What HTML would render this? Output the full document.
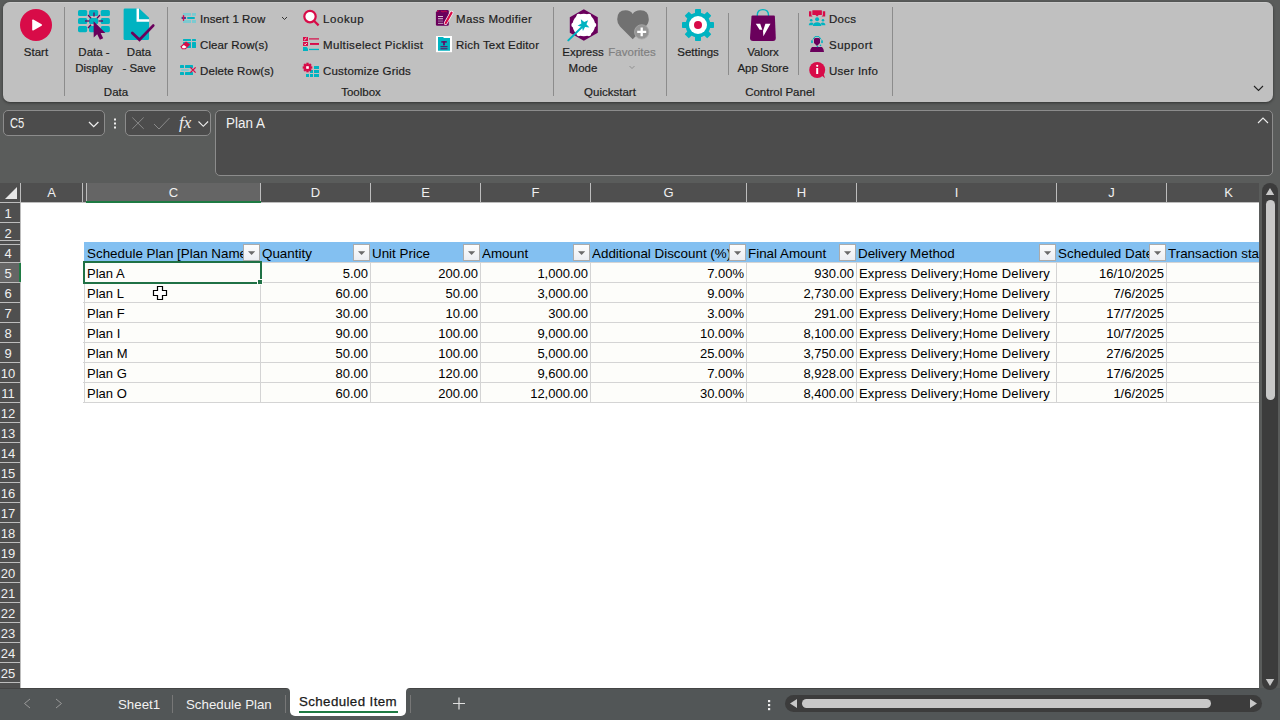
<!DOCTYPE html><html><head><meta charset="utf-8"><style>
*{margin:0;padding:0;box-sizing:border-box}
html,body{width:1280px;height:720px;overflow:hidden;background:#5a5c5b;font-family:"Liberation Sans",sans-serif;position:relative}
.a{position:absolute}
.t{position:absolute;white-space:nowrap;line-height:14px;font-size:11.5px;color:#1e1e1e;-webkit-text-stroke:0.2px currentColor}
.tc{position:absolute;white-space:nowrap;line-height:14px;font-size:11.5px;color:#1e1e1e;text-align:center;width:120px;-webkit-text-stroke:0.2px currentColor}
.rib{left:3px;top:2px;width:1270px;height:100px;background:#c0c0c0;border-radius:7px;border-top:1px solid #cbcbcb;box-shadow:0 1px 3px rgba(0,0,0,0.45)}
.sep{position:absolute;width:1px;background:#8c8c8c}
.cell{position:absolute;white-space:nowrap;overflow:hidden;font-size:13px;line-height:20px;color:#000}
.ch{position:absolute;top:183px;height:18px;background:#4f4f4f;color:#f0f0f0;font-size:13px;line-height:19px;text-align:center}
.rh{position:absolute;left:0;width:16px;height:19px;color:#f0f0f0;font-size:13px;line-height:21px;text-align:center}
.ln{position:absolute;background:#bdbdbd}
</style></head><body>
<div class="a rib"></div>
<svg class="a" style="left:0;top:0" width="1280" height="105"><circle cx="36" cy="25" r="16" fill="#d80b48"/><path d="M32.2 20.2 Q32.2 19 33.3 19.6 L41.6 24.2 Q42.6 25 41.6 25.7 L33.3 30.4 Q32.2 31 32.2 29.8 Z" fill="#fff"/><rect x="78" y="10" width="9.2" height="6.1" rx="1.6" fill="#00b3c1"/><rect x="78" y="18" width="9.2" height="6.1" rx="1.6" fill="#00b3c1"/><rect x="78" y="26.1" width="9.2" height="6.1" rx="1.6" fill="#00b3c1"/><rect x="89" y="10" width="9.2" height="6.1" rx="1.6" fill="#00b3c1"/><rect x="89" y="18" width="9.2" height="6.1" rx="1.6" fill="#00b3c1"/><rect x="89" y="26.1" width="9.2" height="6.1" rx="1.6" fill="#00b3c1"/><rect x="100.7" y="10" width="9.2" height="6.1" rx="1.6" fill="#00b3c1"/><rect x="100.7" y="18" width="9.2" height="6.1" rx="1.6" fill="#00b3c1"/><rect x="100.7" y="26.1" width="9.2" height="6.1" rx="1.6" fill="#00b3c1"/><g stroke="#6a005c" stroke-width="1.3" stroke-linecap="butt"><line x1="94" y1="12.5" x2="94" y2="16.5"/><line x1="88" y1="15" x2="91" y2="18.3"/><line x1="100" y1="15" x2="97" y2="18.3"/><line x1="85" y1="21" x2="89.5" y2="21"/><line x1="98.5" y1="21" x2="103" y2="21"/><line x1="88" y1="28" x2="91" y2="24.8"/></g><path d="M93.6 21.2 L105.4 32.9 L100.6 33 L103.2 38.2 L99.9 39.8 L97.2 34.3 L93.7 37.6 Z" fill="#6a005c"/><path d="M125 8.6 L139.2 8.6 L149.1 17.8 L149.1 38.5 Q149.1 40 147.6 40 L125 40 Q123.6 40 123.6 38.5 L123.6 10 Q123.6 8.6 125 8.6 Z" fill="#00b3c1"/><path d="M137.8 8.6 L137.8 20.4 L149.1 20.4" fill="none" stroke="#fff" stroke-width="2.5"/><path d="M132.3 33 L139.5 39.8 L153.2 25.6" fill="none" stroke="#6a005c" stroke-width="2.8" stroke-linecap="round" stroke-linejoin="miter"/><g fill="#7ccad1"><rect x="183" y="13" width="8" height="2.8"/><rect x="192" y="13" width="4" height="2.8"/><rect x="183" y="20" width="8" height="3"/><rect x="192" y="20" width="4" height="3"/></g><rect x="187" y="16.9" width="8" height="2.1" rx="1" fill="#00b3c1"/><rect x="181.6" y="16.9" width="4.3" height="2.1" fill="#3a3a9a"/><rect x="182.8" y="15" width="1.4" height="6" rx="0.7" fill="#d80b48"/><path d="M282 17 L284.5 19.5 L287 17" fill="none" stroke="#333" stroke-width="1"/><g fill="#00b3c1"><rect x="183" y="38.9" width="8" height="2" rx="0.5"/><rect x="192" y="38.9" width="4" height="2" rx="0.5"/><rect x="183" y="42" width="8" height="6" rx="0.5"/><rect x="192" y="42" width="4" height="6" rx="0.5"/></g><path d="M180.3 46.6 L186 41.5 L190.2 44.6 L185.6 49.2 L182 49.2 Z" fill="#d80b48"/><path d="M181.8 46.7 L183.9 44.9 L186.6 47 L185 48.2 L182.6 48.2 Z" fill="#fff"/><g fill="#00b3c1"><rect x="180" y="65" width="4" height="3" rx="0.6"/><rect x="185" y="65" width="8" height="3" rx="0.6"/><rect x="180" y="72" width="4" height="3" rx="0.6"/><rect x="185" y="72" width="8" height="3" rx="0.6"/></g><rect x="181" y="69" width="8" height="2" rx="0.8" fill="#7ccad1"/><path d="M190.4 67.4 L195.6 72.6 M195.6 67.4 L190.4 72.6" stroke="#d80b48" stroke-width="1.3"/><circle cx="310" cy="16.6" r="5.7" fill="#fff" stroke="#d80b48" stroke-width="2.2"/><line x1="314.2" y1="21" x2="318.6" y2="25.4" stroke="#d80b48" stroke-width="2.2"/><rect x="303" y="37" width="5" height="4" fill="#d80b48"/><path d="M304.3 40 L306.5 38" stroke="#fff" stroke-width="0.9"/><rect x="309" y="38.3" width="10" height="1.2" fill="#d80b48"/><rect x="303" y="42" width="5" height="3.9" fill="#d80b48"/><path d="M304.2 43.8 L305.2 44.8 L306.8 43" stroke="#fff" stroke-width="0.9" fill="none"/><rect x="310" y="43" width="9" height="1.9" fill="#d80b48"/><path d="M303 47 L306.5 47 L308 48.5 L308 51 L303 51 Z" fill="#00b3c1"/><rect x="309" y="48.8" width="10" height="1.3" fill="#00b3c1"/><g fill="#00b3c1"><rect x="314" y="66" width="5" height="3"/><rect x="310" y="70" width="3" height="3"/><rect x="314" y="70" width="5" height="3"/><rect x="306" y="74" width="3" height="3"/><rect x="310" y="74" width="3" height="3"/><rect x="314" y="74" width="5" height="3"/></g><g transform="translate(307.5 67.5)"><circle r="3.3" fill="#d80b48"/><rect x="-1.2" y="-4.8" width="2.4" height="2.4" fill="#d80b48" transform="rotate(0)"/><rect x="-1.2" y="-4.8" width="2.4" height="2.4" fill="#d80b48" transform="rotate(45)"/><rect x="-1.2" y="-4.8" width="2.4" height="2.4" fill="#d80b48" transform="rotate(90)"/><rect x="-1.2" y="-4.8" width="2.4" height="2.4" fill="#d80b48" transform="rotate(135)"/><rect x="-1.2" y="-4.8" width="2.4" height="2.4" fill="#d80b48" transform="rotate(180)"/><rect x="-1.2" y="-4.8" width="2.4" height="2.4" fill="#d80b48" transform="rotate(225)"/><rect x="-1.2" y="-4.8" width="2.4" height="2.4" fill="#d80b48" transform="rotate(270)"/><rect x="-1.2" y="-4.8" width="2.4" height="2.4" fill="#d80b48" transform="rotate(315)"/><rect x="-1.3" y="-1.3" width="2.6" height="2.6" fill="#fff"/></g><path d="M437.5 10 L447.5 10 Q448.8 10 448.8 11.3 L448.8 24.5 Q448.8 25.8 447.5 25.8 L437.2 25.8 Q435.9 25.8 435.9 24.5 L435.9 12.5 Z" fill="#6a005c"/><g fill="#e6d7e6"><rect x="438" y="16" width="5" height="0.9"/><rect x="438" y="18.3" width="5" height="0.9"/><rect x="438" y="20.6" width="5" height="0.9" fill="#a585a5"/><rect x="438" y="22.9" width="5" height="0.9" fill="#c4b0c4"/></g><path d="M441 11 L443 12 L445 11 L447 12" stroke="#d80b48" stroke-width="0.8" fill="none"/><path d="M451.6 12.6 L445.6 23.2" stroke="#fff" stroke-width="3.6" stroke-linecap="round"/><path d="M451.6 12.6 L445.6 23.2" stroke="#d80b48" stroke-width="2.2" stroke-linecap="round"/><path d="M437 11.8 L439 10.5" stroke="#d80b48" stroke-width="0.8"/><rect x="436" y="36" width="16" height="16.2" fill="#fff"/><path d="M438 37 L443 37 L444 38 L450 38 L450 50.8 L438 50.8 Z" fill="#00b3c1"/><rect x="441.3" y="41.2" width="5.5" height="1.4" fill="#6a005c"/><rect x="443.2" y="41.2" width="1.6" height="4.2" fill="#6a005c"/><rect x="440.5" y="46.2" width="7" height="1" fill="#6a005c"/><rect x="440.5" y="48.3" width="7" height="1" fill="#6a005c"/><path d="M583.8 9.2 L597.8 17.2 L597.8 32.8 L583.8 40.8 L569.8 32.8 L569.8 17.2 Z" fill="#6a005c"/><g fill="#fff"><circle cx="583.8" cy="25" r="11.3"/><circle cx="594.00" cy="25.00" r="2.3"/><circle cx="588.90" cy="33.83" r="2.3"/><circle cx="578.70" cy="33.83" r="2.3"/><circle cx="573.60" cy="25.00" r="2.3"/><circle cx="578.70" cy="16.17" r="2.3"/><circle cx="588.90" cy="16.17" r="2.3"/></g><polygon points="580.84,19.14 584.18,22.03 588.18,20.17 586.46,24.23 589.46,27.46 585.07,27.08 582.92,30.94 581.92,26.64 577.60,25.79 581.37,23.52" fill="#00b3c1"/><line x1="568.3" y1="40.4" x2="582" y2="27" stroke="#00b3c1" stroke-width="2" stroke-linecap="round"/><path d="M632.7 39.2 L620 26.5 Q617.2 23.5 617.2 19.2 Q617.2 10.2 625.6 10.2 Q630.5 10.2 632.7 13.9 Q635 10.2 640.4 10.2 Q648.8 10.2 648.8 19.2 Q648.8 23.5 645.4 26.5 Z" fill="#717171"/><circle cx="641.7" cy="31.9" r="7.2" fill="#959595" stroke="#aaa" stroke-width="0.8"/><path d="M641.7 27.6 L641.7 36.3 M637.2 31.9 L646.2 31.9" stroke="#fff" stroke-width="2.3"/><path d="M629.5 66 L632 68.5 L634.5 66" fill="none" stroke="#8a8a8a" stroke-width="0.9"/><g transform="translate(698 25)"><rect x="-3" y="-16" width="6" height="6" rx="0.8" fill="#00b3c1" transform="rotate(0)"/><rect x="-3" y="-16" width="6" height="6" rx="0.8" fill="#00b3c1" transform="rotate(45)"/><rect x="-3" y="-16" width="6" height="6" rx="0.8" fill="#00b3c1" transform="rotate(90)"/><rect x="-3" y="-16" width="6" height="6" rx="0.8" fill="#00b3c1" transform="rotate(135)"/><rect x="-3" y="-16" width="6" height="6" rx="0.8" fill="#00b3c1" transform="rotate(180)"/><rect x="-3" y="-16" width="6" height="6" rx="0.8" fill="#00b3c1" transform="rotate(225)"/><rect x="-3" y="-16" width="6" height="6" rx="0.8" fill="#00b3c1" transform="rotate(270)"/><rect x="-3" y="-16" width="6" height="6" rx="0.8" fill="#00b3c1" transform="rotate(315)"/><circle r="12.5" fill="#00b3c1"/><circle r="9" fill="#fff"/><circle r="4" fill="#d80b48"/></g><path d="M757.3 20 L757.3 15 Q757.3 9.6 762.9 9.6 Q768.5 9.6 768.5 15 L768.5 20" fill="none" stroke="#00b3c1" stroke-width="1.4"/><path d="M752.5 15.6 L774 15.6 Q774.8 15.6 774.9 16.5 L775.8 38 Q775.8 41 773 41 L753 41 Q750 41 750 38 L751.5 16.5 Q751.6 15.6 752.5 15.6 Z" fill="#6a005c"/><path d="M755.8 23.8 L760.2 23.8 L762.3 29.8 L759.6 29.8 Z M765.4 23.8 L770.5 23.8 L763.4 36.3 L763 31 Z" fill="#fff"/><g fill="#d80b48"><rect x="812.3" y="10.2" width="9.6" height="4.8" rx="0.6"/><path d="M815.5 15 L818.7 15 L817.1 16.6 Z"/><path d="M809 11.2 L811.4 11.2 L811.4 15.2 L812.6 16.4 L809 16.4 Z"/><path d="M825.2 11.2 L822.8 11.2 L822.8 15.2 L821.6 16.4 L825.2 16.4 Z"/></g><g fill="#00b3c1"><circle cx="817.1" cy="19.3" r="2"/><path d="M812.8 26 Q813 22.2 817.1 22.2 Q821.2 22.2 821.4 26 Z"/><circle cx="811.2" cy="20.2" r="1.3"/><circle cx="823" cy="20.2" r="1.3"/><path d="M808.8 25.3 Q809 22.5 811.4 22.5 Q813 22.5 813.4 23.5 L812.4 25.3 Z"/><path d="M825.4 25.3 Q825.2 22.5 822.8 22.5 Q821.2 22.5 820.8 23.5 L821.8 25.3 Z"/></g><path d="M814 39 Q814 38 815.5 38 L818.5 38 Q820 38 820 39 L820 43 L817 46 L814 43 Z" fill="#6a005c"/><path d="M810 52 L810.6 49 L812 47 L822 47 L823.4 49 L824 52 Z" fill="#6a005c"/><path d="M812.8 39.5 L815 36.6 L819 36.6 L821.2 39.5" fill="none" stroke="#00b3c1" stroke-width="1"/><rect x="811.2" y="40.3" width="1.6" height="2.8" fill="#00b3c1"/><rect x="821.2" y="40.3" width="1.6" height="2.8" fill="#00b3c1"/><circle cx="820.5" cy="45.4" r="0.8" fill="#00b3c1"/><circle cx="817.5" cy="46.5" r="0.8" fill="#00b3c1"/><circle cx="817.2" cy="70" r="8" fill="#d80b48"/><path d="M821 75 L825 78.3 L823.2 72.5 Z" fill="#d80b48"/><rect x="816.2" y="68" width="2" height="6" fill="#fff"/><circle cx="817.2" cy="65.8" r="1.1" fill="#fff"/><path d="M1254 86 L1258.5 90.5 L1263 86" fill="none" stroke="#222" stroke-width="1.1"/></svg>
<div class="sep" style="left:64px;top:7px;height:89px"></div>
<div class="sep" style="left:167px;top:7px;height:89px"></div>
<div class="sep" style="left:553px;top:7px;height:89px"></div>
<div class="sep" style="left:666px;top:7px;height:89px"></div>
<div class="sep" style="left:728px;top:13px;height:62px"></div>
<div class="sep" style="left:798px;top:13px;height:62px"></div>
<div class="sep" style="left:892px;top:7px;height:89px"></div>
<div class="tc" style="left:-24px;top:45px;color:#1e1e1e">Start</div>
<div class="tc" style="left:34px;top:45px;color:#1e1e1e">Data -</div>
<div class="tc" style="left:34px;top:61px;color:#1e1e1e">Display</div>
<div class="tc" style="left:79px;top:45px;color:#1e1e1e">Data</div>
<div class="tc" style="left:79px;top:61px;color:#1e1e1e">- Save</div>
<div class="tc" style="left:56px;top:85px;color:#1e1e1e">Data</div>
<div class="t" style="left:200px;top:12px;color:#1e1e1e;letter-spacing:0.06px">Insert 1 Row</div>
<div class="t" style="left:200px;top:38px;color:#1e1e1e;letter-spacing:0.1px">Clear Row(s)</div>
<div class="t" style="left:200px;top:64px;color:#1e1e1e;letter-spacing:0.09px">Delete Row(s)</div>
<div class="t" style="left:323px;top:12px;color:#1e1e1e;letter-spacing:0.6px">Lookup</div>
<div class="t" style="left:323px;top:38px;color:#1e1e1e;letter-spacing:0.35px">Multiselect Picklist</div>
<div class="t" style="left:323px;top:64px;color:#1e1e1e;letter-spacing:0.2px">Customize Grids</div>
<div class="t" style="left:456px;top:12px;color:#1e1e1e;letter-spacing:0.35px">Mass Modifier</div>
<div class="t" style="left:456px;top:38px;color:#1e1e1e;letter-spacing:0.18px">Rich Text Editor</div>
<div class="tc" style="left:301px;top:85px;color:#1e1e1e">Toolbox</div>
<div class="tc" style="left:523px;top:45px;color:#1e1e1e">Express</div>
<div class="tc" style="left:523px;top:61px;color:#1e1e1e">Mode</div>
<div class="tc" style="left:572px;top:45px;color:#808080">Favorites</div>
<div class="tc" style="left:550px;top:85px;color:#1e1e1e">Quickstart</div>
<div class="tc" style="left:638px;top:45px;color:#1e1e1e">Settings</div>
<div class="tc" style="left:703px;top:45px;color:#1e1e1e">Valorx</div>
<div class="tc" style="left:703px;top:61px;color:#1e1e1e">App Store</div>
<div class="t" style="left:829px;top:12px;color:#1e1e1e;letter-spacing:0.3px">Docs</div>
<div class="t" style="left:829px;top:38px;color:#1e1e1e;letter-spacing:0.5px">Support</div>
<div class="t" style="left:829px;top:64px;color:#1e1e1e;letter-spacing:0.28px">User Info</div>
<div class="tc" style="left:720px;top:85px;color:#1e1e1e">Control Panel</div>
<div class="a" style="left:3px;top:110px;width:102px;height:26px;border:1px solid #8c8c8c;border-radius:5px;background:#4c4c4c"></div>
<div class="a" style="left:10px;top:116px;font-size:14px;line-height:14px;color:#f2f2f2;transform:scaleX(0.8);transform-origin:0 0">C5</div>
<div class="a" style="left:125px;top:110px;width:86px;height:26px;border:1px solid #8c8c8c;border-radius:5px;background:#4c4c4c"></div>
<div class="a" style="left:215px;top:110px;width:1058px;height:66px;border:1px solid #8c8c8c;border-radius:5px;background:#4c4c4c"></div>
<div class="a" style="left:226px;top:116px;font-size:14px;line-height:14px;color:#f2f2f2;transform:scaleX(0.96);transform-origin:0 0">Plan A</div>
<svg class="a" style="left:0;top:105px" width="1280" height="80"><path d="M89 17 L93.7 21.7 L98.4 17" fill="none" stroke="#eee" stroke-width="1.3"/><rect x="114" y="13.5" width="2" height="2" fill="#eee"/><rect x="114" y="17.5" width="2" height="2" fill="#eee"/><rect x="114" y="21.5" width="2" height="2" fill="#eee"/><path d="M132.3 12.5 L143.7 23.8 M143.7 12.5 L132.3 23.8" stroke="#8a8a8a" stroke-width="1"/><path d="M154 19 L159 24 L169.5 13" fill="none" stroke="#8a8a8a" stroke-width="1"/><path d="M198.5 16.5 L203.3 21.3 L208.1 16.5" fill="none" stroke="#eee" stroke-width="1.1"/><path d="M1258 18 L1263 13 L1268 18" fill="none" stroke="#eee" stroke-width="1.1"/></svg>
<div class="a" style="left:179px;top:114px;font-family:'Liberation Serif';font-style:italic;font-size:17px;line-height:18px;color:#eee">fx</div>
<div class="a" style="left:0;top:183px;width:1259px;height:505px;background:#4f4f4f"></div>
<div class="a" style="left:21px;top:203px;width:1238px;height:485px;background:#ffffff"></div>
<div class="ch" style="left:21px;width:61px;background:#4f4f4f">A</div>
<div class="ln" style="left:82px;top:183px;width:1px;height:19px"></div>
<div class="ch" style="left:87px;width:173px;background:#656565">C</div>
<div class="ln" style="left:260px;top:183px;width:1px;height:19px"></div>
<div class="ch" style="left:261px;width:109px;background:#4f4f4f">D</div>
<div class="ln" style="left:370px;top:183px;width:1px;height:19px"></div>
<div class="ch" style="left:371px;width:109px;background:#4f4f4f">E</div>
<div class="ln" style="left:480px;top:183px;width:1px;height:19px"></div>
<div class="ch" style="left:481px;width:109px;background:#4f4f4f">F</div>
<div class="ln" style="left:590px;top:183px;width:1px;height:19px"></div>
<div class="ch" style="left:591px;width:155px;background:#4f4f4f">G</div>
<div class="ln" style="left:746px;top:183px;width:1px;height:19px"></div>
<div class="ch" style="left:747px;width:109px;background:#4f4f4f">H</div>
<div class="ln" style="left:856px;top:183px;width:1px;height:19px"></div>
<div class="ch" style="left:857px;width:199px;background:#4f4f4f">I</div>
<div class="ln" style="left:1056px;top:183px;width:1px;height:19px"></div>
<div class="ch" style="left:1057px;width:109px;background:#4f4f4f">J</div>
<div class="ln" style="left:1166px;top:183px;width:1px;height:19px"></div>
<div class="ch" style="left:1167px;width:123px;background:#4f4f4f">K</div>
<div class="a" style="left:83px;top:183px;width:3px;height:19px;background:#555"></div>
<div class="ln" style="left:86px;top:183px;width:1px;height:19px"></div>
<div class="ln" style="left:0;top:202px;width:1259px;height:1px"></div>
<div class="a" style="left:86px;top:201px;width:175px;height:2px;background:#1f7a43"></div>
<div class="ln" style="left:20px;top:183px;width:1px;height:505px"></div>
<svg class="a" style="left:4px;top:186px" width="14" height="14"><path d="M13 1 L13 13 L1 13 Z" fill="#e8e8e8"/></svg>
<div class="rh" style="top:203px">1</div>
<div class="ln" style="left:0;top:222px;width:20px;height:1px"></div>
<div class="rh" style="top:223px">2</div>
<div class="rh" style="top:243px">4</div>
<div class="ln" style="left:0;top:262px;width:20px;height:1px"></div>
<div class="a" style="left:0;top:263px;width:20px;height:19px;background:#656565"></div>
<div class="rh" style="top:263px">5</div>
<div class="ln" style="left:0;top:282px;width:20px;height:1px"></div>
<div class="rh" style="top:283px">6</div>
<div class="ln" style="left:0;top:302px;width:20px;height:1px"></div>
<div class="rh" style="top:303px">7</div>
<div class="ln" style="left:0;top:322px;width:20px;height:1px"></div>
<div class="rh" style="top:323px">8</div>
<div class="ln" style="left:0;top:342px;width:20px;height:1px"></div>
<div class="rh" style="top:343px">9</div>
<div class="ln" style="left:0;top:362px;width:20px;height:1px"></div>
<div class="rh" style="top:363px">10</div>
<div class="ln" style="left:0;top:382px;width:20px;height:1px"></div>
<div class="rh" style="top:383px">11</div>
<div class="ln" style="left:0;top:402px;width:20px;height:1px"></div>
<div class="rh" style="top:403px">12</div>
<div class="ln" style="left:0;top:422px;width:20px;height:1px"></div>
<div class="rh" style="top:423px">13</div>
<div class="ln" style="left:0;top:442px;width:20px;height:1px"></div>
<div class="rh" style="top:443px">14</div>
<div class="ln" style="left:0;top:462px;width:20px;height:1px"></div>
<div class="rh" style="top:463px">15</div>
<div class="ln" style="left:0;top:482px;width:20px;height:1px"></div>
<div class="rh" style="top:483px">16</div>
<div class="ln" style="left:0;top:502px;width:20px;height:1px"></div>
<div class="rh" style="top:503px">17</div>
<div class="ln" style="left:0;top:522px;width:20px;height:1px"></div>
<div class="rh" style="top:523px">18</div>
<div class="ln" style="left:0;top:542px;width:20px;height:1px"></div>
<div class="rh" style="top:543px">19</div>
<div class="ln" style="left:0;top:562px;width:20px;height:1px"></div>
<div class="rh" style="top:563px">20</div>
<div class="ln" style="left:0;top:582px;width:20px;height:1px"></div>
<div class="rh" style="top:583px">21</div>
<div class="ln" style="left:0;top:602px;width:20px;height:1px"></div>
<div class="rh" style="top:603px">22</div>
<div class="ln" style="left:0;top:622px;width:20px;height:1px"></div>
<div class="rh" style="top:623px">23</div>
<div class="ln" style="left:0;top:642px;width:20px;height:1px"></div>
<div class="rh" style="top:643px">24</div>
<div class="ln" style="left:0;top:662px;width:20px;height:1px"></div>
<div class="rh" style="top:663px">25</div>
<div class="ln" style="left:0;top:682px;width:20px;height:1px"></div>
<div class="ln" style="left:0;top:240px;width:20px;height:1px"></div>
<div class="ln" style="left:0;top:244px;width:20px;height:1px"></div>
<div class="a" style="left:19px;top:263px;width:2px;height:19px;background:#1f7a43"></div>
<div class="a" style="left:84px;top:242px;width:1175px;height:20px;background:#83c0f1"></div>
<div class="a" style="left:84px;top:262px;width:1175px;height:140px;background:#fdfdfa"></div>
<div class="a" style="left:83px;top:262px;width:1176px;height:1px;background:#d4d4d4"></div>
<div class="a" style="left:83px;top:282px;width:1176px;height:1px;background:#d4d4d4"></div>
<div class="a" style="left:83px;top:302px;width:1176px;height:1px;background:#d4d4d4"></div>
<div class="a" style="left:83px;top:322px;width:1176px;height:1px;background:#d4d4d4"></div>
<div class="a" style="left:83px;top:342px;width:1176px;height:1px;background:#d4d4d4"></div>
<div class="a" style="left:83px;top:362px;width:1176px;height:1px;background:#d4d4d4"></div>
<div class="a" style="left:83px;top:382px;width:1176px;height:1px;background:#d4d4d4"></div>
<div class="a" style="left:83px;top:402px;width:1176px;height:1px;background:#d4d4d4"></div>
<div class="a" style="left:260px;top:262px;width:1px;height:140px;background:#d4d4d4"></div>
<div class="a" style="left:370px;top:262px;width:1px;height:140px;background:#d4d4d4"></div>
<div class="a" style="left:480px;top:262px;width:1px;height:140px;background:#d4d4d4"></div>
<div class="a" style="left:590px;top:262px;width:1px;height:140px;background:#d4d4d4"></div>
<div class="a" style="left:746px;top:262px;width:1px;height:140px;background:#d4d4d4"></div>
<div class="a" style="left:856px;top:262px;width:1px;height:140px;background:#d4d4d4"></div>
<div class="a" style="left:1056px;top:262px;width:1px;height:140px;background:#d4d4d4"></div>
<div class="a" style="left:1166px;top:262px;width:1px;height:140px;background:#d4d4d4"></div>
<div class="a" style="left:84px;top:262px;width:1px;height:140px;background:#d4d4d4"></div>
<div class="cell" style="left:87px;top:244px;width:172px;height:18px;font-size:13.4px;line-height:19px">Schedule Plan [Plan Name]</div>
<div class="a" style="left:243px;top:244px;width:17px;height:17px;background:linear-gradient(#fdfdfd,#eceef2);border:1px solid #ababab"><svg width="15" height="15" style="position:absolute;left:0;top:0"><path d="M4 6.2 L11.2 6.2 L7.6 10 Z" fill="#6a6a6a"/></svg></div>
<div class="cell" style="left:262px;top:244px;width:108px;height:18px;font-size:13.4px;line-height:19px">Quantity</div>
<div class="a" style="left:353px;top:244px;width:17px;height:17px;background:linear-gradient(#fdfdfd,#eceef2);border:1px solid #ababab"><svg width="15" height="15" style="position:absolute;left:0;top:0"><path d="M4 6.2 L11.2 6.2 L7.6 10 Z" fill="#6a6a6a"/></svg></div>
<div class="cell" style="left:372px;top:244px;width:108px;height:18px;font-size:13.4px;line-height:19px">Unit Price</div>
<div class="a" style="left:463px;top:244px;width:17px;height:17px;background:linear-gradient(#fdfdfd,#eceef2);border:1px solid #ababab"><svg width="15" height="15" style="position:absolute;left:0;top:0"><path d="M4 6.2 L11.2 6.2 L7.6 10 Z" fill="#6a6a6a"/></svg></div>
<div class="cell" style="left:482px;top:244px;width:108px;height:18px;font-size:13.4px;line-height:19px">Amount</div>
<div class="a" style="left:573px;top:244px;width:17px;height:17px;background:linear-gradient(#fdfdfd,#eceef2);border:1px solid #ababab"><svg width="15" height="15" style="position:absolute;left:0;top:0"><path d="M4 6.2 L11.2 6.2 L7.6 10 Z" fill="#6a6a6a"/></svg></div>
<div class="cell" style="left:592px;top:244px;width:154px;height:18px;font-size:13.4px;line-height:19px">Additional Discount (%)</div>
<div class="a" style="left:729px;top:244px;width:17px;height:17px;background:linear-gradient(#fdfdfd,#eceef2);border:1px solid #ababab"><svg width="15" height="15" style="position:absolute;left:0;top:0"><path d="M4 6.2 L11.2 6.2 L7.6 10 Z" fill="#6a6a6a"/></svg></div>
<div class="cell" style="left:748px;top:244px;width:108px;height:18px;font-size:13.4px;line-height:19px">Final Amount</div>
<div class="a" style="left:839px;top:244px;width:17px;height:17px;background:linear-gradient(#fdfdfd,#eceef2);border:1px solid #ababab"><svg width="15" height="15" style="position:absolute;left:0;top:0"><path d="M4 6.2 L11.2 6.2 L7.6 10 Z" fill="#6a6a6a"/></svg></div>
<div class="cell" style="left:858px;top:244px;width:198px;height:18px;font-size:13.4px;line-height:19px">Delivery Method</div>
<div class="a" style="left:1039px;top:244px;width:17px;height:17px;background:linear-gradient(#fdfdfd,#eceef2);border:1px solid #ababab"><svg width="15" height="15" style="position:absolute;left:0;top:0"><path d="M4 6.2 L11.2 6.2 L7.6 10 Z" fill="#6a6a6a"/></svg></div>
<div class="cell" style="left:1058px;top:244px;width:108px;height:18px;font-size:13.4px;line-height:19px">Scheduled Date</div>
<div class="a" style="left:1149px;top:244px;width:17px;height:17px;background:linear-gradient(#fdfdfd,#eceef2);border:1px solid #ababab"><svg width="15" height="15" style="position:absolute;left:0;top:0"><path d="M4 6.2 L11.2 6.2 L7.6 10 Z" fill="#6a6a6a"/></svg></div>
<div class="cell" style="left:1168px;top:244px;width:91px;height:18px;font-size:13.4px;line-height:19px">Transaction status</div>
<div class="cell" style="left:86px;top:264px;width:174px;text-align:left;padding-left:1px">Plan A</div>
<div class="cell" style="left:260px;top:264px;width:110px;text-align:right;padding-right:2px">5.00</div>
<div class="cell" style="left:370px;top:264px;width:110px;text-align:right;padding-right:2px">200.00</div>
<div class="cell" style="left:480px;top:264px;width:110px;text-align:right;padding-right:2px">1,000.00</div>
<div class="cell" style="left:590px;top:264px;width:156px;text-align:right;padding-right:2px">7.00%</div>
<div class="cell" style="left:746px;top:264px;width:110px;text-align:right;padding-right:2px">930.00</div>
<div class="cell" style="left:856px;top:264px;width:200px;text-align:left;padding-left:3px;letter-spacing:0.15px">Express Delivery;Home Delivery</div>
<div class="cell" style="left:1056px;top:264px;width:110px;text-align:right;padding-right:2px">16/10/2025</div>
<div class="cell" style="left:86px;top:284px;width:174px;text-align:left;padding-left:1px">Plan L</div>
<div class="cell" style="left:260px;top:284px;width:110px;text-align:right;padding-right:2px">60.00</div>
<div class="cell" style="left:370px;top:284px;width:110px;text-align:right;padding-right:2px">50.00</div>
<div class="cell" style="left:480px;top:284px;width:110px;text-align:right;padding-right:2px">3,000.00</div>
<div class="cell" style="left:590px;top:284px;width:156px;text-align:right;padding-right:2px">9.00%</div>
<div class="cell" style="left:746px;top:284px;width:110px;text-align:right;padding-right:2px">2,730.00</div>
<div class="cell" style="left:856px;top:284px;width:200px;text-align:left;padding-left:3px;letter-spacing:0.15px">Express Delivery;Home Delivery</div>
<div class="cell" style="left:1056px;top:284px;width:110px;text-align:right;padding-right:2px">7/6/2025</div>
<div class="cell" style="left:86px;top:304px;width:174px;text-align:left;padding-left:1px">Plan F</div>
<div class="cell" style="left:260px;top:304px;width:110px;text-align:right;padding-right:2px">30.00</div>
<div class="cell" style="left:370px;top:304px;width:110px;text-align:right;padding-right:2px">10.00</div>
<div class="cell" style="left:480px;top:304px;width:110px;text-align:right;padding-right:2px">300.00</div>
<div class="cell" style="left:590px;top:304px;width:156px;text-align:right;padding-right:2px">3.00%</div>
<div class="cell" style="left:746px;top:304px;width:110px;text-align:right;padding-right:2px">291.00</div>
<div class="cell" style="left:856px;top:304px;width:200px;text-align:left;padding-left:3px;letter-spacing:0.15px">Express Delivery;Home Delivery</div>
<div class="cell" style="left:1056px;top:304px;width:110px;text-align:right;padding-right:2px">17/7/2025</div>
<div class="cell" style="left:86px;top:324px;width:174px;text-align:left;padding-left:1px">Plan I</div>
<div class="cell" style="left:260px;top:324px;width:110px;text-align:right;padding-right:2px">90.00</div>
<div class="cell" style="left:370px;top:324px;width:110px;text-align:right;padding-right:2px">100.00</div>
<div class="cell" style="left:480px;top:324px;width:110px;text-align:right;padding-right:2px">9,000.00</div>
<div class="cell" style="left:590px;top:324px;width:156px;text-align:right;padding-right:2px">10.00%</div>
<div class="cell" style="left:746px;top:324px;width:110px;text-align:right;padding-right:2px">8,100.00</div>
<div class="cell" style="left:856px;top:324px;width:200px;text-align:left;padding-left:3px;letter-spacing:0.15px">Express Delivery;Home Delivery</div>
<div class="cell" style="left:1056px;top:324px;width:110px;text-align:right;padding-right:2px">10/7/2025</div>
<div class="cell" style="left:86px;top:344px;width:174px;text-align:left;padding-left:1px">Plan M</div>
<div class="cell" style="left:260px;top:344px;width:110px;text-align:right;padding-right:2px">50.00</div>
<div class="cell" style="left:370px;top:344px;width:110px;text-align:right;padding-right:2px">100.00</div>
<div class="cell" style="left:480px;top:344px;width:110px;text-align:right;padding-right:2px">5,000.00</div>
<div class="cell" style="left:590px;top:344px;width:156px;text-align:right;padding-right:2px">25.00%</div>
<div class="cell" style="left:746px;top:344px;width:110px;text-align:right;padding-right:2px">3,750.00</div>
<div class="cell" style="left:856px;top:344px;width:200px;text-align:left;padding-left:3px;letter-spacing:0.15px">Express Delivery;Home Delivery</div>
<div class="cell" style="left:1056px;top:344px;width:110px;text-align:right;padding-right:2px">27/6/2025</div>
<div class="cell" style="left:86px;top:364px;width:174px;text-align:left;padding-left:1px">Plan G</div>
<div class="cell" style="left:260px;top:364px;width:110px;text-align:right;padding-right:2px">80.00</div>
<div class="cell" style="left:370px;top:364px;width:110px;text-align:right;padding-right:2px">120.00</div>
<div class="cell" style="left:480px;top:364px;width:110px;text-align:right;padding-right:2px">9,600.00</div>
<div class="cell" style="left:590px;top:364px;width:156px;text-align:right;padding-right:2px">7.00%</div>
<div class="cell" style="left:746px;top:364px;width:110px;text-align:right;padding-right:2px">8,928.00</div>
<div class="cell" style="left:856px;top:364px;width:200px;text-align:left;padding-left:3px;letter-spacing:0.15px">Express Delivery;Home Delivery</div>
<div class="cell" style="left:1056px;top:364px;width:110px;text-align:right;padding-right:2px">17/6/2025</div>
<div class="cell" style="left:86px;top:384px;width:174px;text-align:left;padding-left:1px">Plan O</div>
<div class="cell" style="left:260px;top:384px;width:110px;text-align:right;padding-right:2px">60.00</div>
<div class="cell" style="left:370px;top:384px;width:110px;text-align:right;padding-right:2px">200.00</div>
<div class="cell" style="left:480px;top:384px;width:110px;text-align:right;padding-right:2px">12,000.00</div>
<div class="cell" style="left:590px;top:384px;width:156px;text-align:right;padding-right:2px">30.00%</div>
<div class="cell" style="left:746px;top:384px;width:110px;text-align:right;padding-right:2px">8,400.00</div>
<div class="cell" style="left:856px;top:384px;width:200px;text-align:left;padding-left:3px;letter-spacing:0.15px">Express Delivery;Home Delivery</div>
<div class="cell" style="left:1056px;top:384px;width:110px;text-align:right;padding-right:2px">1/6/2025</div>
<div class="a" style="left:83px;top:261px;width:179px;height:23px;border:2px solid #1f7145"></div>
<div class="a" style="left:257px;top:279px;width:6px;height:6px;background:#1f7145;border:1px solid #fdfdfa"></div>
<svg class="a" style="left:152px;top:285px" width="16" height="16"><path d="M5.5 1.5 H10.5 V5.5 H14.5 V10.5 H10.5 V14.5 H5.5 V10.5 H1.5 V5.5 H5.5 Z" fill="#fff" stroke="#000" stroke-width="1.2"/></svg>
<div class="a" style="left:1259px;top:183px;width:21px;height:505px;background:#5a5c5b"></div>
<div class="a" style="left:0;top:688px;width:1280px;height:32px;background:#525657"></div>
<div class="a" style="left:0;top:688px;width:1259px;height:1px;background:#444"></div>
<div class="a" style="left:1262px;top:183px;width:16px;height:507px;background:#3c3c3c;border-radius:8px"></div>
<div class="a" style="left:1266px;top:200px;width:9px;height:200px;background:#c8c8c8;border-radius:4.5px"></div>
<svg class="a" style="left:1262px;top:183px" width="16" height="507"><path d="M3.8 12 L8 5 L12.2 12 Z M3.8 496 L12.2 496 L8 503 Z" fill="#c8c8c8"/></svg>
<div class="a" style="left:290px;top:686px;width:116px;height:30px;background:#ffffff;border-radius:0 0 5px 5px"></div>
<svg class="a" style="left:0;top:688px" width="1280" height="32"><path d="M286 0 L290 0 L290 4 Q290 0 286 0 Z" fill="#fff"/><path d="M406 0 L410 0 Q406 0 406 4 Z" fill="#fff"/><path d="M30 11 L24.5 15.5 L30 20" fill="none" stroke="#9a9a9a" stroke-width="1"/><path d="M56 11 L61.5 15.5 L56 20" fill="none" stroke="#9a9a9a" stroke-width="1"/><rect x="172" y="7" width="1" height="18" fill="#777"/><rect x="285" y="7" width="1" height="18" fill="#777"/><rect x="410" y="7" width="1" height="18" fill="#777"/><path d="M459 9.5 V21.5 M453 15.5 H465" stroke="#e0e0e0" stroke-width="1.2"/><rect x="768" y="12" width="2.2" height="2.2" fill="#eee"/><rect x="768" y="16" width="2.2" height="2.2" fill="#eee"/><rect x="768" y="20" width="2.2" height="2.2" fill="#eee"/></svg>
<div class="a" style="left:118px;top:697px;font-size:13.3px;line-height:16px;color:#f2f2f2">Sheet1</div>
<div class="a" style="left:186px;top:697px;font-size:13.3px;line-height:16px;color:#f2f2f2">Schedule Plan</div>
<div class="a" style="left:299px;top:694px;font-size:13.3px;letter-spacing:0.4px;line-height:16px;color:#1a1a1a;-webkit-text-stroke:0.25px #1a1a1a">Scheduled Item</div>
<div class="a" style="left:299px;top:711px;width:99px;height:2px;background:#1f7a43"></div>
<div class="a" style="left:785px;top:695px;width:477px;height:17px;background:#3c3c3c;border-radius:8.5px"></div>
<div class="a" style="left:802px;top:699px;width:409px;height:9px;background:#c8c8c8;border-radius:4.5px"></div>
<svg class="a" style="left:785px;top:695px" width="477" height="17"><path d="M5 8.5 L12 4 L12 13 Z M472 8.5 L465 4 L465 13 Z" fill="#c8c8c8"/></svg>
</body></html>
